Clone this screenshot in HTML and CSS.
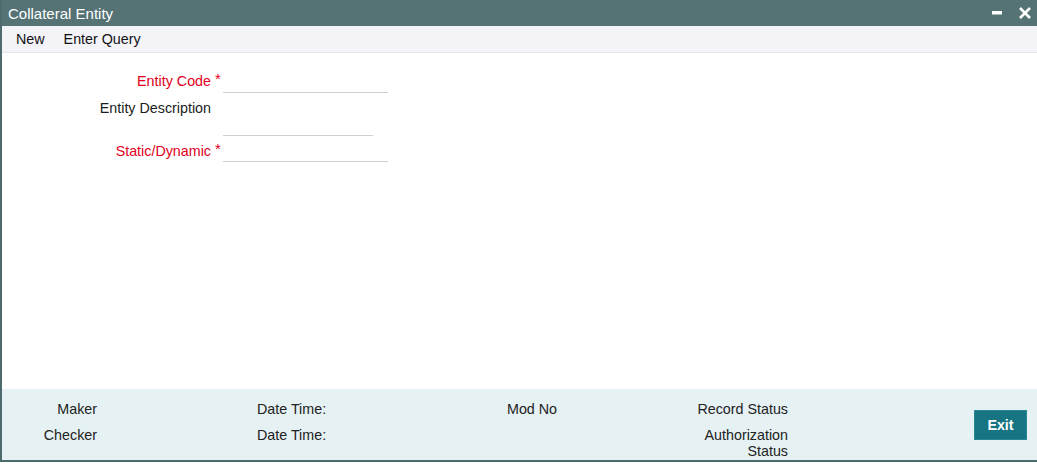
FILE: index.html
```html
<!DOCTYPE html>
<html>
<head>
<meta charset="utf-8">
<title>Collateral Entity</title>
<link rel="stylesheet" href="styles.css">
</head>
<body>
<div class="window">
  <div class="titlebar">
    <span class="title">Collateral Entity</span>
    <div class="controls">
      <svg class="ctl" width="14" height="14" viewBox="0 0 14 14"><rect x="2" y="5" width="10" height="3.5" fill="#fff"/></svg>
      <svg class="ctl" width="14" height="14" viewBox="0 0 14 14"><path d="M2 2 L12 12 M12 2 L2 12" stroke="#fff" stroke-width="2.6" fill="none"/></svg>
    </div>
  </div>
  <div class="toolbar">
    <span class="tool">New</span>
    <span class="tool">Enter Query</span>
  </div>
  <div class="main">
    <div class="form">
      <div class="row r1">
        <label class="lbl req">Entity Code</label>
        <span class="star">*</span>
        <span class="field w165"></span>
      </div>
      <div class="row r2">
        <label class="lbl">Entity Description</label>
        <span class="star"></span>
        <span class="field w150 tall"></span>
      </div>
      <div class="row r3">
        <label class="lbl req">Static/Dynamic</label>
        <span class="star">*</span>
        <span class="field w165"></span>
      </div>
    </div>
  </div>
  <div class="footer">
    <span class="f c1 rA">Maker</span>
    <span class="f c3 rA">Date Time:</span>
    <span class="f c4 rA">Mod No</span>
    <span class="f c5 rA">Record Status</span>
    <span class="f c1 rB">Checker</span>
    <span class="f c3 rB">Date Time:</span>
    <span class="f c5 rB">Authorization<br>Status</span>
    <button class="exit">Exit</button>
  </div>
</div>
</body>
</html>
```
FILE: styles.css
```css
* { box-sizing: border-box; }
html, body { margin: 0; padding: 0; background: #fff; }
body {
  font-family: "Liberation Sans", Arial, sans-serif;
  font-size: 14.3px;
  color: #1c1c1c;
}
.window {
  width: 1037px;
  height: 462px;
  display: flex;
  flex-direction: column;
  border-left: 2px solid #4d6a6c;
  border-bottom: 2px solid #4d6a6c;
  overflow: hidden;
}
.titlebar {
  height: 26px;
  background: #557275;
  display: flex;
  align-items: center;
  justify-content: space-between;
  padding: 0 5px 0 6px;
}
.title {
  color: #fff;
  font-size: 15px;
}
.controls {
  display: flex;
  gap: 14px;
  align-items: center;
}
.ctl { display: block; }
.toolbar {
  height: 27px;
  background: #f4f4f8;
  border-bottom: 1px solid #e6e6ea;
  display: flex;
  align-items: center;
  padding-left: 14px;
  gap: 19px;
}
.tool { color: #111; }
.main {
  flex: 1;
  background: #fff;
  padding-top: 16px;
}
.form { display: flex; flex-direction: column; }
.row {
  display: grid;
  grid-template-columns: 209px 12px auto;
}
.r1 { height: 24px; }
.r2 { height: 43px; }
.r3 { height: 26px; }
.lbl {
  text-align: right;
  line-height: 18px;
  white-space: nowrap;
}
.r1 .lbl { padding-top: 3px; }
.r2 .lbl { padding-top: 6px; }
.r3 .lbl { padding-top: 6px; }
.req { color: #e0001c; }
.star {
  color: #e0001c;
  font-size: 15px;
  line-height: 18px;
  padding-left: 4px;
}
.r1 .star { padding-top: 1px; }
.r3 .star { padding-top: 4px; }
.field {
  display: block;
  border-bottom: 1px solid #cfcfcf;
  height: 24px;
}
.r2 .field { height: 43px; }
.r3 .field { height: 26px; }
.w165 { width: 165px; }
.w150 { width: 150px; }
.footer {
  height: 71px;
  background: #e5f1f3;
  display: grid;
  grid-template-columns: 95px 160px 250px 181px 100px 1fr;
  grid-template-rows: 12px 16px 10px 33px;
  color: #222;
}
.f { line-height: 16px; white-space: nowrap; }
.rA { grid-row: 2; }
.rB { grid-row: 4; }
.c1 { grid-column: 1; text-align: right; }
.c3 { grid-column: 3; }
.c4 { grid-column: 4; }
.c5 { grid-column: 5; text-align: right; }
.exit {
  grid-column: 6;
  grid-row: 1 / 5;
  justify-self: end;
  align-self: center;
  margin-right: 10px;
  width: 53px;
  height: 30px;
  background: #177482;
  border: 1px solid #2a8794;
  color: #fff;
  font-family: "Liberation Sans", Arial, sans-serif;
  font-weight: bold;
  font-size: 14.3px;
  padding: 0;
}
```
